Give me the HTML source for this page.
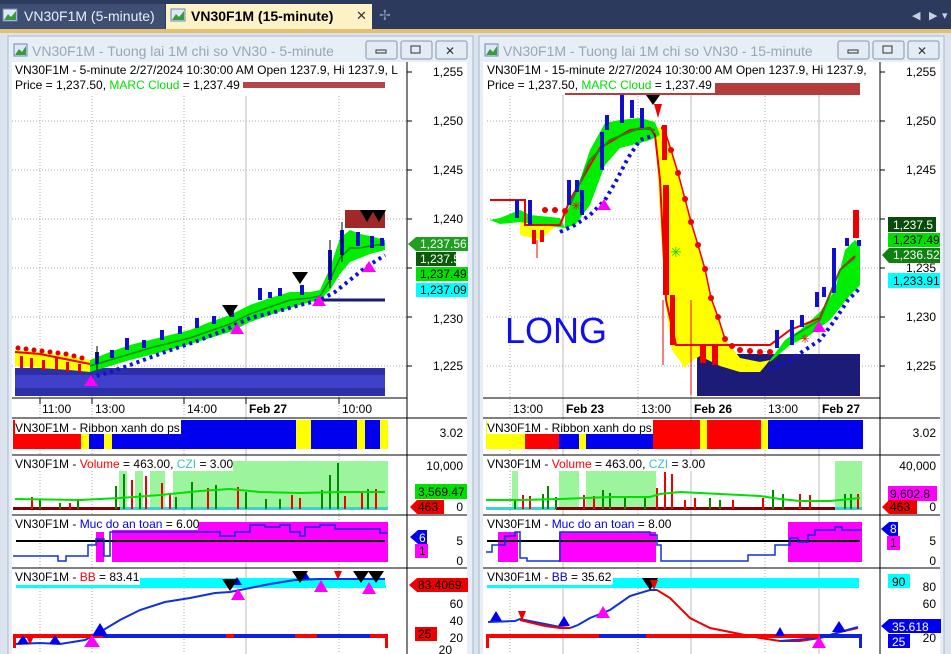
<!DOCTYPE html>
<html><head><meta charset="utf-8"><style>
html,body{margin:0;padding:0;background:#dfe7f0;}
svg{display:block;font-family:"Liberation Sans",sans-serif;}
</style></head><body>
<svg width="951" height="654" viewBox="0 0 951 654" xmlns="http://www.w3.org/2000/svg">
<rect x="0" y="0" width="951" height="29" fill="#2c3b5d"/>
<rect x="0" y="4" width="165" height="25" fill="#3e4f73"/>
<rect x="3" y="9" width="14" height="12" fill="#dfe9f5" stroke="#6a88b8"/><path d="M4 20 L8 14 L11 17 L16 11 L16 20Z" fill="#3a9a3a"/>
<text x="24" y="21" font-size="14" fill="#e8eef8">VN30F1M (5-minute)</text>
<rect x="166" y="4" width="206" height="25" fill="#fdf2c6"/>
<rect x="171" y="9" width="14" height="12" fill="#dfe9f5" stroke="#6a88b8"/><path d="M172 20 L176 14 L179 17 L184 11 L184 20Z" fill="#3a9a3a"/>
<text x="191" y="21" font-size="14" font-weight="bold" fill="#000">VN30F1M (15-minute)</text>
<text x="356" y="20" font-size="13" fill="#333">✕</text>
<text x="379" y="20" font-size="14" fill="#8090a8">✢</text>
<text x="912" y="19" font-size="11" fill="#c8d0e0">◀</text><text x="929" y="19" font-size="11" fill="#c8d0e0">▶</text><text x="942" y="19" font-size="11" fill="#c8d0e0">▾</text>
<rect x="0" y="29" width="951" height="4" fill="#e6c071"/>
<rect x="0" y="33" width="951" height="621" fill="#dae3ee"/>

<!-- LEFT WINDOW -->
<rect x="8" y="36" width="465" height="620" fill="#e7eef6" stroke="#a6b9cf"/>
<rect x="14" y="44" width="13" height="12" fill="#dfe9f5" stroke="#6a88b8"/><path d="M15 55 L19 49 L22 52 L26 46 L26 55Z" fill="#3a9a3a"/>
<text x="32" y="56" font-size="14" fill="#9aa6b6">VN30F1M - Tuong lai 1M chi so VN30 - 5-minute</text>
<rect x="366" y="41" width="31" height="18" rx="2" fill="#e3ebf4" stroke="#8496ad"/><rect x="376" y="50" width="10" height="3" fill="none" stroke="#333"/>
<rect x="401" y="41" width="31" height="18" rx="2" fill="#e3ebf4" stroke="#8496ad"/><rect x="411" y="46" width="9" height="7" fill="none" stroke="#333"/>
<rect x="436" y="41" width="31" height="18" rx="2" fill="#e3ebf4" stroke="#8496ad"/><text x="445" y="55" font-size="12" fill="#333">✕</text>
<rect x="12" y="62" width="455" height="592" fill="#fff"/>
<g stroke="#aaa" stroke-dasharray="1,2">
<line x1="40" y1="66" x2="40" y2="654"/><line x1="92" y1="66" x2="92" y2="654"/><line x1="184" y1="66" x2="184" y2="654"/><line x1="339" y1="66" x2="339" y2="654"/>
<line x1="12" y1="121" x2="407" y2="121"/><line x1="12" y1="170" x2="407" y2="170"/><line x1="12" y1="219" x2="407" y2="219"/><line x1="12" y1="268" x2="407" y2="268"/><line x1="12" y1="317" x2="407" y2="317"/><line x1="12" y1="366" x2="407" y2="366"/>
</g>
<line x1="246" y1="84" x2="246" y2="654" stroke="#bbb"/>
<rect x="15" y="368" width="370" height="28" fill="#2b2fa8"/><rect x="15" y="375" width="370" height="13" fill="#4040c8"/>
<rect x="345" y="210" width="40" height="18" fill="#a02828"/>
<line x1="300" y1="300" x2="385" y2="300" stroke="#1a1a7a" stroke-width="3"/>
<polygon points="15,350 40,352 70,356 90,360 90,372 70,370 40,368 15,366" fill="#ffff00"/>
<g fill="#e00"><rect x="20" y="356" width="3" height="12"/><rect x="30" y="358" width="3" height="10"/><rect x="42" y="360" width="3" height="10"/><rect x="55" y="358" width="3" height="12"/><rect x="66" y="362" width="3" height="10"/><rect x="78" y="364" width="3" height="8"/></g>
<polygon points="90,360 110,352 130,345 150,340 170,335 190,330 210,322 230,315 250,305 270,298 290,292 310,292 320,290 330,268 340,238 350,230 360,234 370,236 385,240 385,250 370,254 360,258 350,262 340,274 330,290 320,300 310,302 290,308 270,315 250,322 230,332 210,338 190,344 170,350 150,355 130,360 110,366 90,372" fill="#00ee00"/>
<polyline points="90,366 110,360 130,354 150,348 170,343 190,338 210,331 230,324 250,314 270,307 290,300 310,298 320,296 330,280 340,258 350,248 360,248 370,246 385,244" fill="none" stroke="#1a8a1a" stroke-width="1.5"/>
<polyline points="15,352 40,354 70,360 90,364" fill="none" stroke="#ee0000" stroke-width="2"/>
<g fill="#e00000"><circle cx="18" cy="348" r="2.5"/><circle cx="26" cy="349" r="2.5"/><circle cx="34" cy="350" r="2.5"/><circle cx="42" cy="351" r="2.5"/><circle cx="50" cy="352" r="2.5"/><circle cx="58" cy="353" r="2.5"/><circle cx="66" cy="354" r="2.5"/><circle cx="74" cy="356" r="2.5"/><circle cx="82" cy="358" r="2.5"/></g>
<polyline points="90,378 110,372 130,365 165,352 200,340 225,330 250,318 275,312 300,305 320,300 335,292 350,280 365,268 385,255" fill="none" stroke="#1010dd" stroke-width="4" stroke-dasharray="3,4"/>
<g fill="#1010cc">
<rect x="95" y="352" width="4" height="12"/><rect x="110" y="350" width="4" height="8"/><rect x="125" y="338" width="4" height="12"/><rect x="142" y="340" width="4" height="8"/><rect x="160" y="330" width="4" height="10"/><rect x="178" y="326" width="4" height="8"/><rect x="195" y="318" width="4" height="10"/><rect x="212" y="316" width="4" height="8"/><rect x="230" y="305" width="4" height="12"/><rect x="258" y="288" width="4" height="12"/><rect x="268" y="292" width="4" height="6"/><rect x="278" y="288" width="4" height="8"/><rect x="300" y="285" width="4" height="10"/><rect x="328" y="250" width="4" height="30"/><rect x="340" y="230" width="4" height="25"/><rect x="356" y="232" width="4" height="14"/><rect x="370" y="236" width="4" height="12"/><rect x="380" y="238" width="4" height="8"/>
</g>
<g stroke="#000" stroke-width="1"><line x1="97" y1="346" x2="97" y2="370"/><line x1="342" y1="222" x2="342" y2="262"/><line x1="330" y1="240" x2="330" y2="288"/></g>
<g fill="#000"><path d="M222 305 h16 l-8 12z"/><path d="M292 272 h16 l-8 12z"/><path d="M360 210 h14 l-7 12z"/><path d="M372 210 h14 l-7 12z"/></g>
<g fill="#ff00ff"><path d="M230 334 l7 -11 l7 11z"/><path d="M312 306 l7 -11 l7 11z"/><path d="M362 272 l7 -11 l7 11z"/><path d="M84 386 l7 -11 l7 11z"/></g>
<rect x="12" y="62" width="395" height="34" fill="#fff"/>
<rect x="243" y="82" width="142" height="6" fill="#b04848"/>
<text x="15" y="74" font-size="12" fill="#000">VN30F1M - 5-minute 2/27/2024 10:30:00 AM Open 1237.9, Hi 1237.9, L</text>
<text x="15" y="89" font-size="12" fill="#000">Price = 1,237.50, <tspan fill="#00e000">MARC Cloud</tspan> = 1,237.49</text>
<line x1="407" y1="62" x2="407" y2="654" stroke="#000"/>
<g font-size="12" fill="#000" text-anchor="end">
<text x="463" y="76">1,255</text><text x="463" y="125">1,250</text><text x="463" y="174">1,245</text><text x="463" y="223">1,240</text><text x="463" y="323">1,230</text><text x="463" y="370">1,225</text>
</g>
<g stroke="#000"><line x1="407" y1="72" x2="412" y2="72"/><line x1="407" y1="121" x2="412" y2="121"/><line x1="407" y1="170" x2="412" y2="170"/><line x1="407" y1="219" x2="412" y2="219"/><line x1="407" y1="268" x2="412" y2="268"/><line x1="407" y1="317" x2="412" y2="317"/><line x1="407" y1="366" x2="412" y2="366"/></g>
<path d="M408 244 l8 -7 h52 v14 h-52z" fill="#20a020"/><text x="420" y="248" font-size="12" fill="#fff">1,237.56</text>
<rect x="416" y="252" width="40" height="14" fill="#0a5a0a"/><text x="420" y="263" font-size="12" fill="#fff">1,237.5</text>
<rect x="416" y="267" width="52" height="14" fill="#00e000"/><text x="420" y="278" font-size="12" fill="#000">1,237.49</text>
<rect x="416" y="283" width="52" height="14" fill="#00ffff"/><text x="420" y="294" font-size="12" fill="#000">1,237.09</text>
<line x1="12" y1="398" x2="407" y2="398" stroke="#000"/>
<g font-size="12" fill="#000"><text x="42" y="413">11:00</text><text x="95" y="413">13:00</text><text x="187" y="413">14:00</text><text x="249" y="413" font-weight="bold">Feb 27</text><text x="342" y="413">10:00</text></g>
<g stroke="#000"><line x1="40" y1="398" x2="40" y2="404"/><line x1="92" y1="398" x2="92" y2="404"/><line x1="184" y1="398" x2="184" y2="404"/><line x1="246" y1="398" x2="246" y2="404"/><line x1="339" y1="398" x2="339" y2="404"/></g>
<g stroke="#000"><line x1="12" y1="418" x2="467" y2="418"/><line x1="12" y1="455" x2="467" y2="455"/><line x1="12" y1="515" x2="467" y2="515"/><line x1="12" y1="568" x2="467" y2="568"/></g>
<rect x="13" y="420" width="68" height="29" fill="#f00"/><rect x="81" y="420" width="8" height="29" fill="#ff0"/><rect x="89" y="420" width="15" height="29" fill="#00e"/><rect x="104" y="420" width="8" height="29" fill="#ff0"/><rect x="112" y="420" width="184" height="29" fill="#00e"/><rect x="296" y="420" width="15" height="29" fill="#ff0"/><rect x="311" y="420" width="46" height="29" fill="#00e"/><rect x="357" y="420" width="8" height="29" fill="#ff0"/><rect x="365" y="420" width="15" height="29" fill="#00e"/><rect x="380" y="420" width="8" height="29" fill="#ff0"/>
<rect x="15" y="420" width="166" height="14" fill="#fff"/>
<text x="15" y="432" font-size="12">VN30F1M - Ribbon xanh do ps</text>
<text x="463" y="437" font-size="12" text-anchor="end">3.02</text>
<g fill="#9cf59c"><rect x="119" y="471" width="8" height="38"/><rect x="135" y="471" width="8" height="38"/><rect x="150" y="471" width="15" height="38"/><rect x="173" y="461" width="215" height="48"/></g>
<rect x="13" y="507" width="375" height="3" fill="#800000"/><rect x="120" y="507" width="268" height="3" fill="#40d0d0"/>
<g stroke="#080" stroke-width="2"><line x1="40" y1="509" x2="40" y2="499"/><line x1="60" y1="509" x2="60" y2="503"/><line x1="78" y1="509" x2="78" y2="500"/><line x1="116" y1="509" x2="116" y2="486"/><line x1="124" y1="509" x2="124" y2="474"/><line x1="140" y1="509" x2="140" y2="493"/><line x1="176" y1="509" x2="176" y2="497"/><line x1="192" y1="509" x2="192" y2="482"/><line x1="216" y1="509" x2="216" y2="485"/><line x1="246" y1="509" x2="246" y2="492"/><line x1="266" y1="509" x2="266" y2="499"/><line x1="280" y1="509" x2="280" y2="499"/><line x1="322" y1="509" x2="322" y2="490"/><line x1="330" y1="509" x2="330" y2="475"/><line x1="338" y1="509" x2="338" y2="463"/><line x1="368" y1="509" x2="368" y2="489"/></g>
<g stroke="#e00" stroke-width="2"><line x1="32" y1="509" x2="32" y2="497"/><line x1="70" y1="509" x2="70" y2="503"/><line x1="132" y1="509" x2="132" y2="480"/><line x1="146" y1="509" x2="146" y2="476"/><line x1="162" y1="509" x2="162" y2="483"/><line x1="170" y1="509" x2="170" y2="494"/><line x1="208" y1="509" x2="208" y2="488"/><line x1="238" y1="509" x2="238" y2="487"/><line x1="292" y1="509" x2="292" y2="495"/><line x1="300" y1="509" x2="300" y2="498"/><line x1="345" y1="509" x2="345" y2="496"/><line x1="362" y1="509" x2="362" y2="492"/><line x1="376" y1="509" x2="376" y2="489"/></g>
<polyline points="15,499 80,500 120,498 160,495 200,491 230,489 260,492 300,493 340,492 385,492" fill="none" stroke="#00e000" stroke-width="2"/>
<rect x="15" y="456" width="218" height="15" fill="#fff"/>
<text x="15" y="468" font-size="12">VN30F1M - <tspan fill="#f00">Volume</tspan> = 463.00, <tspan fill="#40c0c0">CZI</tspan> = 3.00</text>
<g font-size="12" text-anchor="end"><text x="463" y="470">10,000</text><text x="463" y="511">0</text></g>
<rect x="415" y="484" width="52" height="15" fill="#00e000"/><text x="418" y="496" font-size="12">3,569.47</text>
<path d="M410 507 l7 -7 h27 v14 h-27z" fill="#e00"/><text x="418" y="511" font-size="12">463</text>
<rect x="96" y="532" width="8" height="30" fill="#f0f"/><rect x="112" y="522" width="276" height="40" fill="#f0f"/>
<line x1="16" y1="541" x2="385" y2="541" stroke="#000" stroke-width="2"/>
<polyline points="13,556 58,556 58,561 66,561 66,556 88,556 88,545 96,545 96,539 104,539 104,556 110,556 110,532 220,532 220,536 235,536 235,532 250,532 250,525 265,525 265,527 280,527 280,525 290,525 290,532 300,532 300,536 305,536 305,527 320,527 320,525 335,525 335,529 380,529 380,533 388,533" fill="none" stroke="#1030e0" stroke-width="1.5"/>
<rect x="15" y="516" width="183" height="14" fill="#fff"/>
<text x="15" y="528" font-size="12">VN30F1M - <tspan fill="#00e">Muc do an toan</tspan> = 6.00</text>
<path d="M410 537 l8 -7 h9 v14 h-9z" fill="#00e"/><text x="419" y="542" font-size="12" fill="#fff">6</text>
<rect x="415" y="544" width="13" height="14" fill="#f0f"/><text x="419" y="555" font-size="12">1</text>
<g font-size="12" text-anchor="end"><text x="463" y="545">5</text><text x="463" y="565">0</text></g>
<rect x="140" y="578" width="245" height="10" fill="#00ffff"/><rect x="16" y="585" width="370" height="3" fill="#00ffff"/>
<polyline points="16,644 40,643 60,644 85,640 100,632 120,620 140,610 165,602 190,598 215,593 230,592 245,589 270,584 295,580 320,579 385,579" fill="none" stroke="#1030e0" stroke-width="2"/>
<rect x="13" y="634" width="375" height="4" fill="#1020e0"/><rect x="13" y="634" width="90" height="4" fill="#f00"/><rect x="226" y="634" width="8" height="4" fill="#f00"/><rect x="295" y="634" width="22" height="4" fill="#f00"/><rect x="370" y="634" width="18" height="4" fill="#f00"/>
<rect x="13" y="634" width="3" height="14" fill="#f00"/><rect x="385" y="634" width="3" height="14" fill="#f00"/>
<g fill="#00e"><path d="M17 644 l6 -9 l6 9z"/><path d="M49 644 l6 -9 l6 9z"/><path d="M92 636 l8 -13 l8 13z"/><path d="M300 579 l5 -8 l5 8z"/><path d="M232 585 l5 -8 l5 8z"/></g>
<g fill="#f0f"><path d="M84 647 l8 -12 l8 12z"/><path d="M231 600 l7 -12 l7 12z"/><path d="M314 592 l7 -12 l7 12z"/><path d="M362 594 l7 -12 l7 12z"/></g>
<g fill="#000"><path d="M222 579 h16 l-8 12z"/><path d="M292 571 h16 l-8 12z"/><path d="M353 571 h16 l-8 12z"/><path d="M368 571 h16 l-8 12z"/></g>
<g fill="#e00"><path d="M334 571 h8 l-4 9z"/><path d="M26 636 h8 l-4 9z"/></g>
<rect x="15" y="569" width="123" height="15" fill="#fff"/>
<text x="15" y="581" font-size="12">VN30F1M - <tspan fill="#f00">BB</tspan> = 83.41</text>
<path d="M409 585 l8 -7 h51 v14 h-51z" fill="#e00"/><text x="418" y="589" font-size="12">83.4069</text>
<g font-size="12" text-anchor="end"><text x="463" y="608">60</text><text x="463" y="625">40</text><text x="463" y="642">20</text><text x="452" y="654">20</text></g>
<rect x="415" y="627" width="22" height="14" fill="#e00"/><text x="418" y="638" font-size="12">25</text>

<!-- RIGHT WINDOW -->
<rect x="479" y="36" width="465" height="620" fill="#e7eef6" stroke="#a6b9cf"/>
<rect x="485" y="44" width="13" height="12" fill="#dfe9f5" stroke="#6a88b8"/><path d="M486 55 L490 49 L493 52 L497 46 L497 55Z" fill="#3a9a3a"/>
<text x="503" y="56" font-size="14" fill="#9aa6b6">VN30F1M - Tuong lai 1M chi so VN30 - 15-minute</text>
<rect x="838" y="41" width="31" height="18" rx="2" fill="#e3ebf4" stroke="#8496ad"/><rect x="848" y="50" width="10" height="3" fill="none" stroke="#333"/>
<rect x="873" y="41" width="31" height="18" rx="2" fill="#e3ebf4" stroke="#8496ad"/><rect x="883" y="46" width="9" height="7" fill="none" stroke="#333"/>
<rect x="908" y="41" width="31" height="18" rx="2" fill="#e3ebf4" stroke="#8496ad"/><text x="917" y="55" font-size="12" fill="#333">✕</text>
<rect x="483" y="62" width="457" height="592" fill="#fff"/>
<g stroke="#aaa" stroke-dasharray="1,2">
<line x1="510" y1="66" x2="510" y2="654"/><line x1="638" y1="66" x2="638" y2="654"/><line x1="765" y1="66" x2="765" y2="654"/>
<line x1="487" y1="121" x2="880" y2="121"/><line x1="487" y1="170" x2="880" y2="170"/><line x1="487" y1="219" x2="880" y2="219"/><line x1="487" y1="268" x2="880" y2="268"/><line x1="487" y1="317" x2="880" y2="317"/><line x1="487" y1="366" x2="880" y2="366"/>
</g>
<g stroke="#bbb"><line x1="563" y1="84" x2="563" y2="654"/><line x1="691" y1="84" x2="691" y2="654"/><line x1="819" y1="84" x2="819" y2="654"/></g>
<rect x="697" y="354" width="163" height="42" fill="#1c1c78"/>
<polygon points="520,220 540,218 560,222 540,240 520,235" fill="#ffff00"/>
<polygon points="655,128 664,128 671,150 678,173 685,199 691,222 698,245 705,269 711,298 718,317 725,339 740,358 760,362 770,360 760,372 740,372 720,366 700,356 690,362 685,368 672,350 665,300" fill="#ffff00"/>
<polygon points="565,215 575,195 590,150 605,123 620,120 640,118 655,122 660,135 650,140 640,143 620,148 605,165 590,205 575,225 565,228" fill="#00ee00"/>
<polygon points="490,220 500,218 520,210 530,215 560,218 565,228 540,225 520,222 500,224" fill="#00ee00"/>
<polygon points="770,360 785,340 800,330 820,312 835,290 845,250 855,240 860,244 860,285 850,295 830,320 810,335 790,345 770,362" fill="#00ee00"/>
<polyline points="490,200 525,200 525,225 560,225 570,200 600,148 630,130 650,128 655,135 660,180 666,300 676,345 700,345 740,345 770,345 790,330 820,318 840,270 855,256" fill="none" stroke="#e00" stroke-width="2"/>
<polyline points="570,205 590,160 610,140 640,128 655,130" fill="none" stroke="#1a8a1a" stroke-width="2"/>
<polyline points="790,338 820,320 840,270 855,258" fill="none" stroke="#1a8a1a" stroke-width="1.5"/>
<polyline points="664,128 671,150 678,173 685,199 691,222 698,245 705,269 711,298 718,317 725,339" fill="none" stroke="#e00" stroke-width="1.5"/>
<g fill="#e00"><circle cx="664" cy="128" r="3"/><circle cx="671" cy="150" r="3"/><circle cx="678" cy="173" r="3"/><circle cx="685" cy="199" r="3"/><circle cx="691" cy="222" r="3"/><circle cx="698" cy="245" r="3"/><circle cx="705" cy="269" r="3"/><circle cx="711" cy="298" r="3"/><circle cx="718" cy="317" r="3"/><circle cx="725" cy="339" r="3"/><circle cx="732" cy="346" r="3"/><circle cx="740" cy="350" r="3"/><circle cx="750" cy="351" r="3"/><circle cx="760" cy="352" r="3"/><circle cx="770" cy="352" r="3"/><circle cx="545" cy="210" r="3"/><circle cx="555" cy="210" r="3"/><circle cx="565" cy="211" r="3"/></g>
<polyline points="560,232 575,225 590,215 605,200 615,183 628,158 640,140 655,135" fill="none" stroke="#1010dd" stroke-width="4" stroke-dasharray="3,4"/>
<polyline points="770,370 790,360 805,350 820,340 835,320 848,300 860,288" fill="none" stroke="#1010dd" stroke-width="4" stroke-dasharray="3,4"/>
<g fill="#e00"><rect x="662" y="125" width="5" height="35"/><rect x="663" y="185" width="6" height="110"/><rect x="670" y="295" width="5" height="50"/><rect x="700" y="345" width="6" height="18"/><rect x="712" y="345" width="6" height="20"/><rect x="532" y="230" width="4" height="14"/><rect x="540" y="230" width="4" height="12"/><rect x="853" y="210" width="6" height="28"/></g>
<g fill="#1010cc"><rect x="515" y="200" width="4" height="18"/><rect x="528" y="200" width="4" height="25"/><rect x="567" y="180" width="4" height="25"/><rect x="575" y="180" width="4" height="12"/><rect x="580" y="190" width="4" height="25"/><rect x="600" y="132" width="4" height="38"/><rect x="605" y="115" width="4" height="15"/><rect x="620" y="95" width="4" height="28"/><rect x="630" y="100" width="4" height="18"/><rect x="640" y="108" width="4" height="20"/><rect x="775" y="330" width="4" height="18"/><rect x="790" y="320" width="4" height="25"/><rect x="800" y="315" width="4" height="12"/><rect x="815" y="292" width="4" height="15"/><rect x="822" y="287" width="4" height="10"/><rect x="832" y="248" width="4" height="45"/><rect x="845" y="238" width="4" height="8"/><rect x="857" y="240" width="4" height="6"/></g>
<g stroke="#e00" stroke-width="1"><line x1="663" y1="300" x2="663" y2="365"/><line x1="691" y1="300" x2="691" y2="395"/><line x1="537" y1="240" x2="537" y2="258"/></g>
<g fill="#f0f"><path d="M597 210 l7 -11 l7 11z"/><path d="M812 332 l7 -11 l7 11z"/></g>
<text x="670" y="257" font-size="14" fill="#00cc00">✳</text>
<text x="571" y="210" font-size="12" fill="#e00">✳</text><text x="800" y="343" font-size="12" fill="#e00">✳</text>
<text x="505" y="343" font-size="36" fill="#1010ee">LONG</text>
<rect x="483" y="62" width="400" height="33" fill="#fff"/>
<rect x="565" y="83" width="295" height="12" fill="#b43c3c"/>
<rect x="483" y="78" width="232" height="15" fill="#fff"/>
<text x="487" y="74" font-size="12">VN30F1M - 15-minute 2/27/2024 10:30:00 AM Open 1237.9, Hi 1237.9, </text>
<text x="487" y="89" font-size="12">Price = 1,237.50, <tspan fill="#00e000">MARC Cloud</tspan> = 1,237.49</text>
<path d="M646 95 h14 l-7 10z" fill="#000"/><path d="M654 104 h8 l-4 14z" fill="#e00"/>
<line x1="880" y1="62" x2="880" y2="654" stroke="#000"/>
<g font-size="12" fill="#000" text-anchor="end">
<text x="936" y="76">1,255</text><text x="936" y="125">1,250</text><text x="936" y="174">1,245</text><text x="936" y="272">1,235</text><text x="936" y="321">1,230</text><text x="936" y="370">1,225</text>
</g>
<g stroke="#000"><line x1="880" y1="72" x2="885" y2="72"/><line x1="880" y1="121" x2="885" y2="121"/><line x1="880" y1="170" x2="885" y2="170"/><line x1="880" y1="219" x2="885" y2="219"/><line x1="880" y1="268" x2="885" y2="268"/><line x1="880" y1="317" x2="885" y2="317"/><line x1="880" y1="366" x2="885" y2="366"/></g>
<rect x="888" y="217" width="48" height="15" fill="#0a4a0a"/><text x="893" y="229" font-size="12" fill="#fff">1,237.5</text>
<rect x="888" y="233" width="52" height="14" fill="#00e000"/><text x="893" y="244" font-size="12">1,237.49</text>
<path d="M882 255 l7 -7 h51 v15 h-51z" fill="#108010"/><text x="893" y="259" font-size="12" fill="#fff">1,236.52</text>
<rect x="888" y="273" width="52" height="15" fill="#00ffff"/><text x="893" y="285" font-size="12">1,233.91</text>
<line x1="483" y1="398" x2="880" y2="398" stroke="#000"/>
<g font-size="12" fill="#000"><text x="513" y="413">13:00</text><text x="566" y="413" font-weight="bold">Feb 23</text><text x="641" y="413">13:00</text><text x="694" y="413" font-weight="bold">Feb 26</text><text x="768" y="413">13:00</text><text x="822" y="413" font-weight="bold">Feb 27</text></g>
<g stroke="#000"><line x1="483" y1="418" x2="940" y2="418"/><line x1="483" y1="455" x2="940" y2="455"/><line x1="483" y1="515" x2="940" y2="515"/><line x1="483" y1="568" x2="940" y2="568"/></g>
<rect x="486" y="420" width="39" height="29" fill="#ff0"/><rect x="525" y="420" width="34" height="29" fill="#f00"/><rect x="559" y="420" width="20" height="29" fill="#00e"/><rect x="579" y="420" width="7" height="29" fill="#ff0"/><rect x="586" y="420" width="67" height="29" fill="#00e"/><rect x="653" y="420" width="47" height="29" fill="#f00"/><rect x="700" y="420" width="7" height="29" fill="#ff0"/><rect x="707" y="420" width="54" height="29" fill="#f00"/><rect x="761" y="420" width="7" height="29" fill="#ff0"/><rect x="768" y="420" width="95" height="29" fill="#00e"/>
<rect x="487" y="420" width="166" height="14" fill="#fff"/>
<text x="487" y="432" font-size="12">VN30F1M - Ribbon xanh do ps</text>
<text x="936" y="437" font-size="12" text-anchor="end">3.02</text>
<g fill="#9cf59c"><rect x="512" y="471" width="6" height="38"/><rect x="559" y="471" width="20" height="38"/><rect x="586" y="471" width="70" height="38"/><rect x="835" y="461" width="27" height="48"/></g>
<rect x="486" y="507" width="376" height="3" fill="#800000"/><rect x="486" y="507" width="70" height="3" fill="#40d0d0"/><rect x="835" y="507" width="27" height="3" fill="#40d0d0"/>
<g stroke="#080" stroke-width="2"><line x1="515" y1="509" x2="515" y2="500"/><line x1="543" y1="509" x2="543" y2="494"/><line x1="548" y1="509" x2="548" y2="486"/><line x1="556" y1="509" x2="556" y2="497"/><line x1="603" y1="509" x2="603" y2="490"/><line x1="610" y1="509" x2="610" y2="493"/><line x1="625" y1="509" x2="625" y2="497"/><line x1="645" y1="509" x2="645" y2="498"/><line x1="710" y1="509" x2="710" y2="498"/><line x1="720" y1="509" x2="720" y2="500"/><line x1="773" y1="509" x2="773" y2="490"/><line x1="783" y1="509" x2="783" y2="494"/><line x1="845" y1="509" x2="845" y2="494"/><line x1="851" y1="509" x2="851" y2="494"/></g>
<g stroke="#e00" stroke-width="2"><line x1="523" y1="509" x2="523" y2="495"/><line x1="530" y1="509" x2="530" y2="496"/><line x1="584" y1="509" x2="584" y2="495"/><line x1="594" y1="509" x2="594" y2="496"/><line x1="657" y1="509" x2="657" y2="488"/><line x1="665" y1="509" x2="665" y2="472"/><line x1="672" y1="509" x2="672" y2="474"/><line x1="685" y1="509" x2="685" y2="500"/><line x1="695" y1="509" x2="695" y2="498"/><line x1="733" y1="509" x2="733" y2="500"/><line x1="763" y1="509" x2="763" y2="498"/><line x1="800" y1="509" x2="800" y2="494"/><line x1="810" y1="509" x2="810" y2="495"/><line x1="858" y1="509" x2="858" y2="494"/></g>
<polyline points="486,500 520,500 560,499 610,497 650,497 660,494 680,492 720,494 760,496 780,499 800,501 830,501 860,498" fill="none" stroke="#00e000" stroke-width="2"/>
<rect x="487" y="456" width="218" height="15" fill="#fff"/>
<text x="487" y="468" font-size="12">VN30F1M - <tspan fill="#f00">Volume</tspan> = 463.00, <tspan fill="#40c0c0">CZI</tspan> = 3.00</text>
<g font-size="12" text-anchor="end"><text x="936" y="470">40,000</text><text x="936" y="511">0</text></g>
<rect x="888" y="486" width="49" height="15" fill="#f0f"/><text x="890" y="498" font-size="12">9,602.8</text>
<path d="M882 507 l7 -7 h28 v14 h-28z" fill="#e00"/><text x="890" y="511" font-size="12">463</text>
<rect x="498" y="532" width="20" height="30" fill="#f0f"/><rect x="559" y="532" width="97" height="30" fill="#f0f"/><rect x="788" y="522" width="74" height="40" fill="#f0f"/>
<line x1="487" y1="541" x2="860" y2="541" stroke="#000" stroke-width="2"/>
<polyline points="486,552 492,552 492,545 505,545 505,536 515,536 515,532 520,532 520,558 527,558 527,561 560,561 560,532 650,532 650,535 657,535 657,545 661,545 661,561 748,561 748,555 775,555 775,545 790,545 790,538 798,538 798,542 808,542 808,535 815,535 815,530 835,530 835,527 842,527 842,530 862,530" fill="none" stroke="#1030e0" stroke-width="1.5"/>
<rect x="487" y="516" width="183" height="14" fill="#fff"/>
<text x="487" y="528" font-size="12">VN30F1M - <tspan fill="#00e">Muc do an toan</tspan> = 8.00</text>
<path d="M881 529 l8 -7 h9 v14 h-9z" fill="#00e"/><text x="890" y="533" font-size="12" fill="#fff">8</text>
<rect x="887" y="536" width="13" height="14" fill="#f0f"/><text x="890" y="547" font-size="12">1</text>
<g font-size="12" text-anchor="end"><text x="936" y="545">5</text><text x="936" y="565">0</text></g>
<rect x="612" y="578" width="247" height="10" fill="#00ffff"/><rect x="487" y="585" width="372" height="3" fill="#00ffff"/>
<polyline points="488,622 515,621 520,619 545,624 560,627 570,628 578,625 590,618 610,610 630,596 650,590 657,590" fill="none" stroke="#1030e0" stroke-width="2"/>
<polyline points="520,620 545,626 560,628 570,628" fill="none" stroke="#e00" stroke-width="2"/>
<polyline points="657,590 670,598 690,618 710,628 740,634 760,638 780,641 800,641 820,638 840,632 858,628" fill="none" stroke="#e00" stroke-width="2"/>
<polyline points="780,641 820,638 840,632 858,627" fill="none" stroke="#1030e0" stroke-width="2"/>
<rect x="486" y="634" width="376" height="4" fill="#f00"/><rect x="599" y="634" width="47" height="4" fill="#1020e0"/><rect x="820" y="634" width="42" height="4" fill="#1020e0"/>
<rect x="486" y="634" width="3" height="14" fill="#f00"/><rect x="859" y="634" width="3" height="14" fill="#1020e0"/>
<g fill="#00e"><path d="M490 621 l6 -10 l6 10z"/><path d="M558 626 l6 -10 l6 10z"/><path d="M775 636 l5 -9 l5 9z"/><path d="M832 632 l7 -11 l7 11z"/></g>
<g fill="#f0f"><path d="M596 618 l7 -12 l7 12z"/><path d="M812 648 l7 -12 l7 12z"/></g>
<path d="M642 578 h16 l-8 12z" fill="#000"/><path d="M650 580 h8 l-4 10z" fill="#e00"/><path d="M518 611 h8 l-4 10z" fill="#e00"/>
<rect x="487" y="569" width="126" height="15" fill="#fff"/>
<text x="487" y="581" font-size="12">VN30F1M - <tspan fill="#00e">BB</tspan> = 35.62</text>
<rect x="888" y="574" width="22" height="14" fill="#00ffff"/><text x="892" y="586" font-size="12">90</text>
<path d="M881 626 l8 -7 h52 v14 h-52z" fill="#00e"/><text x="892" y="631" font-size="12" fill="#fff">35.618</text>
<rect x="888" y="634" width="22" height="14" fill="#00e"/><text x="892" y="646" font-size="12" fill="#fff">25</text>
<g font-size="12" text-anchor="end"><text x="936" y="591">80</text><text x="936" y="608">60</text><text x="936" y="642">20</text></g>
</svg>
</body></html>
